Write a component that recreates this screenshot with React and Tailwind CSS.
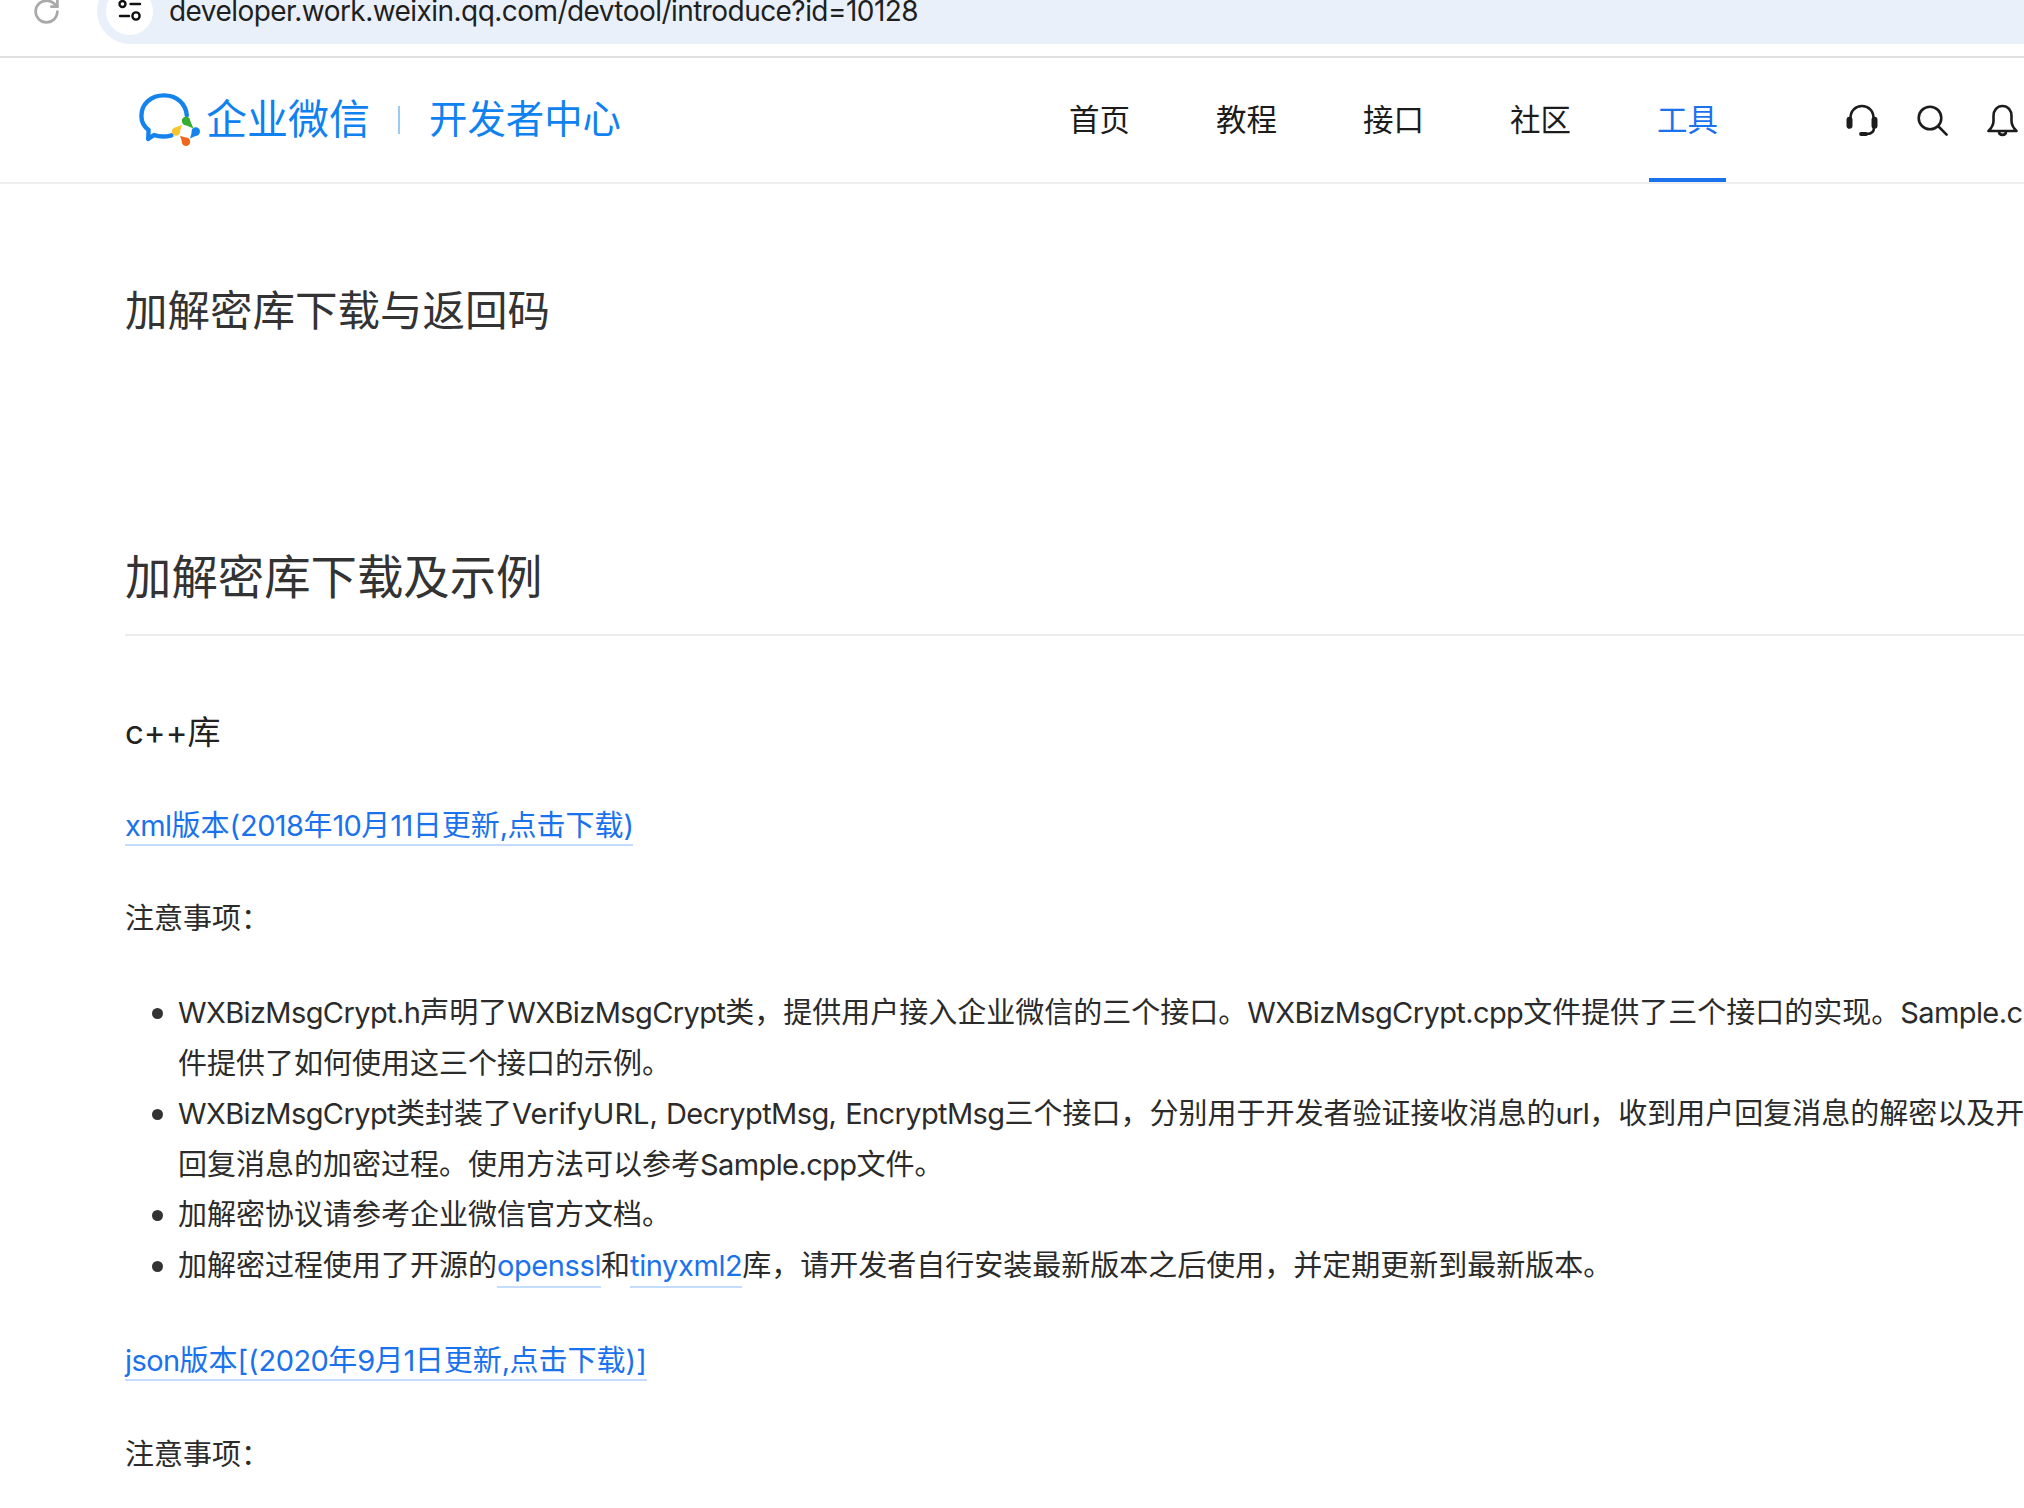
import { RotateCw } from "lucide-react";

const navItems = ["首页", "教程", "接口", "社区", "工具"];

const Logo = () => (
    <svg width="62" height="54" viewBox="0 0 62 54" fill="none" className="shrink-0">
        <path
            d="M32.5 42.3C26.5 44 20.5 44 15 42L9.2 46L9.6 37C4.5 33.2 2.4 28 2.4 23C2.4 11 12 2.4 25 2.4C38 2.4 47 11 47.8 22.5"
            stroke="#1583ee"
            strokeWidth="4.4"
            strokeLinejoin="round"
            strokeLinecap="round"
        />
        <circle cx="47" cy="28" r="4.2" fill="#35ad2f" />
        <path d="M50 25L54.5 35.5L44 31Z" fill="#35ad2f" />
        <circle cx="56.8" cy="38.5" r="4.2" fill="#1583ee" />
        <path d="M59.8 41.5L51 45.5L53.8 35.5Z" fill="#1583ee" />
        <circle cx="47" cy="48.8" r="4.2" fill="#f2651d" />
        <path d="M50 45.8L41 42.7L44 51.8Z" fill="#f2651d" />
        <circle cx="37" cy="38.6" r="4.2" fill="#f7c52c" />
        <path d="M40 41.6L43 31.7L34 35.6Z" fill="#f7c52c" />
    </svg>
);

const HeadsetIcon = () => (
    <svg width="32" height="32" viewBox="0 0 32 32" fill="none" stroke="#1c1c1c" strokeWidth="2.6" strokeLinecap="round">
        <path d="M4.5 14C4.5 7 9.5 2 16 2S27.5 7 27.5 14" />
        <rect x="1.8" y="14" width="3.4" height="9.5" rx="1.7" fill="#1c1c1c" />
        <rect x="26.8" y="14" width="3.4" height="9.5" rx="1.7" fill="#1c1c1c" />
        <path d="M28 23.5C28 27.5 26 29.8 21 30" />
        <path d="M15 30H20" strokeWidth="3.8" />
    </svg>
);

const SearchIcon = () => (
    <svg width="31" height="31" viewBox="0 0 31 31" fill="none" stroke="#1c1c1c" strokeWidth="2.6" strokeLinecap="round">
        <circle cx="13" cy="13" r="11.3" />
        <path d="M21.5 21.5L29.6 29.6" />
    </svg>
);

const BellIcon = () => (
    <svg width="31" height="33" viewBox="0 0 31 33" fill="none" stroke="#1c1c1c" strokeWidth="2.6" strokeLinejoin="round">
        <path d="M15.5 2C10 2 6.5 6.5 6.5 12V17C6.5 21 4.5 24 1.5 27H29.5C26.5 24 24.5 21 24.5 17V12C24.5 6.5 21 2 15.5 2Z" />
        <path d="M12 27.5C12 32 19 32 19 27.5" />
    </svg>
);

const SlidersIcon = () => (
    <svg width="24" height="24" viewBox="0 0 24 24" fill="none" stroke="#111" strokeWidth="2.4" strokeLinecap="round">
        <circle cx="4.5" cy="5" r="3" />
        <path d="M12.5 5H22" />
        <path d="M2 17H11" />
        <circle cx="18" cy="17" r="3.6" />
    </svg>
);

// latin runs sit a bit tighter than the cjk around them
const L = ({ children }) => <span className="tracking-[-0.6px]">{children}</span>;

const TextLink = ({ children }) => (
    <a className="block w-fit h-[40px] leading-[40px] border-b-2 border-[#c4dcfd] text-[#1a72ec]">{children}</a>
);

const Bullet = ({ children }) => (
    <li className="relative before:absolute before:-left-[26px] before:top-[20px] before:h-[11px] before:w-[11px] before:rounded-full before:bg-[#333]">
        {children}
    </li>
);

const App = () => {
    return (
        <div className="w-[2024px] h-[1508px] overflow-hidden bg-white text-[29px] text-[#2b2b2b] font-['Inter','Noto_Sans_CJK_SC',sans-serif]">
            {/* browser bar */}
            <div className="h-[58px] flex items-start overflow-hidden border-b-2 border-[#dfdfdf]">
                <RotateCw size={29} strokeWidth={2.2} color="#a9a9a9" className="ml-[32px] -mt-[3px] shrink-0" />
                <div className="ml-[36px] -mt-[22px] h-[66px] flex-1 flex items-center gap-[16px] pl-[9px] rounded-l-[33px] bg-[#e9f0fa]">
                    <div className="h-[47px] w-[47px] rounded-full bg-white flex items-center justify-center">
                        <SlidersIcon />
                    </div>
                    <span className="text-[#1f1f1f] text-[28px] tracking-[-0.55px] whitespace-nowrap">developer.work.weixin.qq.com/devtool/introduce?id=10128</span>
                </div>
            </div>

            {/* site header */}
            <div className="h-[126px] flex items-center border-b-2 border-[#eeeeee] pl-[139px] pr-[6px]">
                <Logo />
                <span className="ml-[5px] text-[41px] text-[#0f82f0] whitespace-nowrap">企业微信</span>
                <span className="ml-[28px] h-[28px] w-[2px] bg-[#9cc9f5]"></span>
                <span className="ml-[29px] text-[38.4px] text-[#0f82f0] whitespace-nowrap">开发者中心</span>

                <div className="ml-auto h-full flex gap-[70px]">
                    {navItems.map((item) => (
                        <div
                            key={item}
                            className={`w-[77px] flex items-center justify-center text-[30.5px] border-b-4 border-t-4 border-t-transparent ${
                                item === "工具" ? "text-[#1a72ec] border-b-[#1a72ec]" : "text-[#1c1c1c] border-b-transparent"
                            }`}
                        >
                            {item}
                        </div>
                    ))}
                </div>
                <div className="ml-[120px] flex items-center gap-[39px]">
                    <HeadsetIcon />
                    <SearchIcon />
                    <BellIcon />
                </div>
            </div>

            {/* doc content */}
            <div className="pl-[125px]">
                <h1 className="mt-[97px] text-[42.5px] leading-[60px] text-[#333]">加解密库下载与返回码</h1>
                <h2 className="mt-[204px] pb-[25px] text-[46.4px] leading-[64px] text-[#333] border-b-2 border-[#ebebeb]">加解密库下载及示例</h2>

                <p className="mt-[71px] text-[33px] leading-[50px] text-[#222]">c++库</p>
                <div className="mt-[49px]">
                    <TextLink>
                        <L>xml</L>版本(<L>2018</L>年<L>10</L>月<L>11</L>日更新<L>,</L>点击下载<L>)</L>
                    </TextLink>
                </div>
                <p className="mt-[48px] leading-[50px]">注意事项：</p>

                <ul className="mt-[44px] pl-[53px] leading-[50.5px] whitespace-nowrap">
                    <Bullet>
                        <L>WXBizMsgCrypt.h</L>声明了<L>WXBizMsgCrypt</L>类，提供用户接入企业微信的三个接口。<L>WXBizMsgCrypt.cpp</L>文件提供了三个接口的实现。<L>Sample.cpp</L>文
                        <br />
                        件提供了如何使用这三个接口的示例。
                    </Bullet>
                    <Bullet>
                        <L>WXBizMsgCrypt</L>类封装了VerifyURL, <L>DecryptMsg</L>, <L>EncryptMsg</L>三个接口，分别用于开发者验证接收消息的<L>url</L>，收到用户回复消息的解密以及开发者
                        <br />
                        回复消息的加密过程。使用方法可以参考<L>Sample.cpp</L>文件。
                    </Bullet>
                    <Bullet>加解密协议请参考企业微信官方文档。</Bullet>
                    <Bullet>
                        加解密过程使用了开源的
                        <a className="text-[#1a72ec] border-b-2 border-[#c4dcfd] pb-[3px] tracking-[-0.4px]">openssl</a>和
                        <a className="text-[#1a72ec] border-b-2 border-[#c4dcfd] pb-[3px] tracking-[-0.4px]">tinyxml2</a>
                        库，请开发者自行安装最新版本之后使用，并定期更新到最新版本。
                    </Bullet>
                </ul>

                <div className="mt-[50px]">
                    <TextLink>
                        <L>json</L>版本[(<L>2020</L>年<L>9</L>月<L>1</L>日更新<L>,</L>点击下载)]
                    </TextLink>
                </div>
                <p className="mt-[49px] leading-[50px]">注意事项：</p>
            </div>
        </div>
    );
};

export default App;
